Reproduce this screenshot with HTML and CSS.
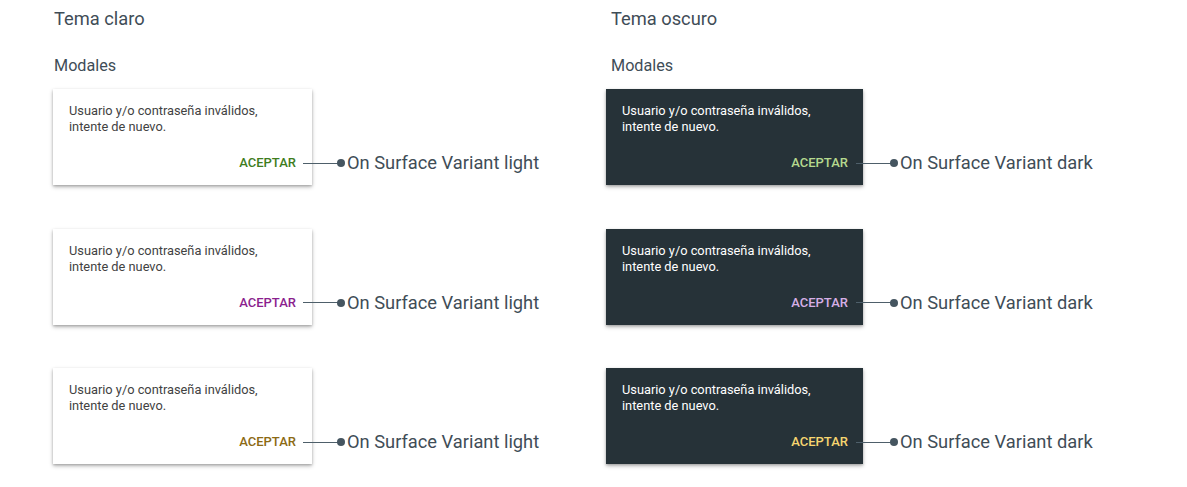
FILE: index.html
```html
<!DOCTYPE html>
<html lang="es">
<head>
<meta charset="utf-8">
<title>Modales</title>
<link rel="stylesheet" href="styles.css">
</head>
<body>
<div class="page">
  <section class="column light">
    <h2 class="title">Tema claro</h2>
    <h3 class="subtitle">Modales</h3>
    <div class="rows">
      <div class="row">
        <div class="card">
          <p class="msg">Usuario y/o contraseña inválidos,<br>intente de nuevo.</p>
          <div class="actions"><span class="btn c-green">ACEPTAR</span></div>
        </div>
        <div class="callout"><span class="line"></span><span class="dot"></span><span class="label">On Surface Variant light</span></div>
      </div>
      <div class="row">
        <div class="card">
          <p class="msg">Usuario y/o contraseña inválidos,<br>intente de nuevo.</p>
          <div class="actions"><span class="btn c-purple">ACEPTAR</span></div>
        </div>
        <div class="callout"><span class="line"></span><span class="dot"></span><span class="label">On Surface Variant light</span></div>
      </div>
      <div class="row">
        <div class="card">
          <p class="msg">Usuario y/o contraseña inválidos,<br>intente de nuevo.</p>
          <div class="actions"><span class="btn c-gold">ACEPTAR</span></div>
        </div>
        <div class="callout"><span class="line"></span><span class="dot"></span><span class="label">On Surface Variant light</span></div>
      </div>
    </div>
  </section>
  <section class="column dark">
    <h2 class="title">Tema oscuro</h2>
    <h3 class="subtitle">Modales</h3>
    <div class="rows">
      <div class="row">
        <div class="card">
          <p class="msg">Usuario y/o contraseña inválidos,<br>intente de nuevo.</p>
          <div class="actions"><span class="btn c-green">ACEPTAR</span></div>
        </div>
        <div class="callout"><span class="line"></span><span class="dot"></span><span class="label">On Surface Variant dark</span></div>
      </div>
      <div class="row">
        <div class="card">
          <p class="msg">Usuario y/o contraseña inválidos,<br>intente de nuevo.</p>
          <div class="actions"><span class="btn c-purple">ACEPTAR</span></div>
        </div>
        <div class="callout"><span class="line"></span><span class="dot"></span><span class="label">On Surface Variant dark</span></div>
      </div>
      <div class="row">
        <div class="card">
          <p class="msg">Usuario y/o contraseña inválidos,<br>intente de nuevo.</p>
          <div class="actions"><span class="btn c-gold">ACEPTAR</span></div>
        </div>
        <div class="callout"><span class="line"></span><span class="dot"></span><span class="label">On Surface Variant dark</span></div>
      </div>
    </div>
  </section>
</div>
</body>
</html>
```

FILE: styles.css
```css
html, body {
  margin: 0;
  padding: 0;
  background: #ffffff;
}

body {
  font-family: Roboto, "Liberation Sans", Arial, sans-serif;
  color: #3f4d57;
}

.page {
  display: grid;
  grid-template-columns: 553px 1fr;
  padding: 8px 0 20px 53px;
}

.column {
  display: flex;
  flex-direction: column;
}

.title {
  margin: 0;
  font-size: 18.3px;
  line-height: 22px;
  font-weight: 400;
  color: #3f4d57;
  padding-left: 1px;
}

.subtitle {
  margin: 26px 0 0;
  font-size: 16.2px;
  line-height: 20px;
  font-weight: 400;
  color: #3f4d57;
  padding-left: 1px;
}

.dark .title,
.dark .subtitle {
  padding-left: 5px;
}

.rows {
  display: flex;
  flex-direction: column;
  gap: 43.5px;
  margin-top: 13px;
}

.row {
  display: flex;
  align-items: flex-end;
}

.card {
  width: 259px;
  height: 96px;
  box-sizing: border-box;
  padding: 14px 16px 14px 16px;
  display: flex;
  flex-direction: column;
  background: #ffffff;
  box-shadow: 0 2px 4px rgba(0, 0, 0, 0.28), 0 1px 2px rgba(0, 0, 0, 0.16);
}

.dark .card {
  width: 257px;
  background: #263238;
  padding-right: 15px;
}

.msg {
  margin: 0;
  font-size: 12.8px;
  line-height: 16px;
  color: #424242;
}

.dark .msg {
  color: #ffffff;
}

.actions {
  margin-top: auto;
  display: flex;
  justify-content: flex-end;
}

.btn {
  font-size: 13px;
  line-height: 16px;
  font-weight: 500;
}

.light .c-green { color: #3f7d1e; }
.light .c-purple { color: #8b1f8e; }
.light .c-gold { color: #8c6a14; }
.dark .c-green { color: #b5d98e; }
.dark .c-purple { color: #d6afe6; }
.dark .c-gold { color: #f6d670; }

.callout {
  display: flex;
  align-items: center;
  margin-left: -9px;
  margin-bottom: 11px;
  position: relative;
  z-index: 1;
}

.dark .callout {
  margin-left: -7px;
}

.line {
  width: 35px;
  height: 1px;
  background: #4e5f6a;
}

.dot {
  width: 8px;
  height: 8px;
  border-radius: 50%;
  background: #455560;
  margin-left: -1px;
}

.label {
  margin-left: 2px;
  font-size: 18.3px;
  line-height: 22px;
  color: #3f4d57;
}
```
